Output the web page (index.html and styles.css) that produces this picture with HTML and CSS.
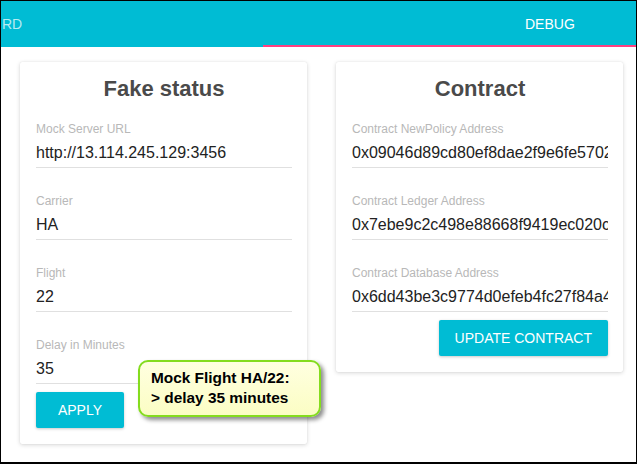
FILE: index.html
```html
<!DOCTYPE html>
<html>
<head>
<meta charset="utf-8">
<link rel="stylesheet" href="styles.css">
</head>
<body>
<div class="page">
  <header class="tabs">
    <div class="tab tab-first"><span>RD</span></div>
    <div class="tab tab-active"><span>DEBUG</span></div>
  </header>
  <main class="cards">
    <section class="card">
      <h2 class="card-title">Fake status</h2>
      <div class="field">
        <div class="field-label">Mock Server URL</div>
        <div class="field-value">http://13.114.245.129:3456</div>
      </div>
      <div class="field">
        <div class="field-label">Carrier</div>
        <div class="field-value">HA</div>
      </div>
      <div class="field">
        <div class="field-label">Flight</div>
        <div class="field-value">22</div>
      </div>
      <div class="field">
        <div class="field-label">Delay in Minutes</div>
        <div class="field-value">35</div>
      </div>
      <button class="btn">APPLY</button>
    </section>
    <section class="card">
      <h2 class="card-title">Contract</h2>
      <div class="field">
        <div class="field-label">Contract NewPolicy Address</div>
        <div class="field-value">0x09046d89cd80ef8dae2f9e6fe5702a</div>
      </div>
      <div class="field">
        <div class="field-label">Contract Ledger Address</div>
        <div class="field-value">0x7ebe9c2c498e88668f9419ec020c1</div>
      </div>
      <div class="field">
        <div class="field-label">Contract Database Address</div>
        <div class="field-value">0x6dd43be3c9774d0efeb4fc27f84a4e</div>
      </div>
      <button class="btn btn-right">UPDATE CONTRACT</button>
    </section>
  </main>
  <div class="callout">Mock Flight HA/22:<br>&gt; delay 35 minutes</div>
</div>
</body>
</html>
```
FILE: styles.css
```css
* { box-sizing: border-box; }
html, body { margin: 0; padding: 0; background: #fff; }
body { font-family: "Liberation Sans", Arial, sans-serif; }

.page {
  position: relative;
  width: 637px;
  height: 464px;
  border: 1px solid #000;
  border-bottom-width: 2px;
  overflow: hidden;
  display: flex;
  flex-direction: column;
}

.tabs {
  height: 46px;
  background: #00bcd4;
  display: flex;
  flex-shrink: 0;
}
.tab {
  display: flex;
  align-items: center;
  font-size: 14px;
  padding-top: 2px;
}
.tab-first {
  width: 262px;
  padding-left: 1px;
  color: rgba(255, 255, 255, 0.72);
  border-bottom: 2px solid transparent;
}
.tab-active {
  flex: 1;
  padding-left: 262px;
  color: #fff;
  border-bottom: 2px solid #ff4081;
}

.cards {
  display: flex;
  align-items: flex-start;
  gap: 29px;
  padding: 15px 0 0 19px;
}

.card {
  width: 287px;
  flex-shrink: 0;
  background: #fff;
  border-radius: 2px;
  box-shadow: 0 1px 4px rgba(0, 0, 0, 0.16), 0 0 1px rgba(0, 0, 0, 0.12);
  padding: 14px 15px 16px 16px;
  display: flex;
  flex-direction: column;
}

.card-title {
  margin: 0 0 19px;
  font-size: 22px;
  line-height: 26px;
  font-weight: bold;
  color: #4a4a4a;
  text-align: center;
}

.field { margin-bottom: 25px; }
.field:last-of-type { margin-bottom: 0; }

.field-label {
  font-size: 12px;
  line-height: 16px;
  color: #b8b8b8;
  white-space: nowrap;
}
.field-value {
  margin-top: 6px;
  font-size: 16px;
  line-height: 20px;
  color: #222;
  padding-bottom: 4px;
  border-bottom: 1px solid #e0e0e0;
  white-space: nowrap;
  overflow: hidden;
}

.btn {
  margin-top: 8px;
  align-self: flex-start;
  height: 36px;
  min-width: 88px;
  padding: 0 16px;
  border: 0;
  border-radius: 2px;
  background: #00bcd4;
  color: #fff;
  font-family: inherit;
  font-size: 14px;
  box-shadow: 0 1px 3px rgba(0, 0, 0, 0.22);
}
.btn-right { align-self: flex-end; }

.callout {
  position: absolute;
  left: 137px;
  top: 359px;
  width: 183px;
  height: 57px;
  padding: 6px 8px 0 11px;
  border: 2px solid #84dc1e;
  border-radius: 10px;
  background: linear-gradient(#ffffe0, #fbfdc4);
  box-shadow: 3px 3px 4px rgba(0, 0, 0, 0.45);
  font-size: 15.4px;
  line-height: 20px;
  font-weight: bold;
  color: #000;
  white-space: nowrap;
}
```
